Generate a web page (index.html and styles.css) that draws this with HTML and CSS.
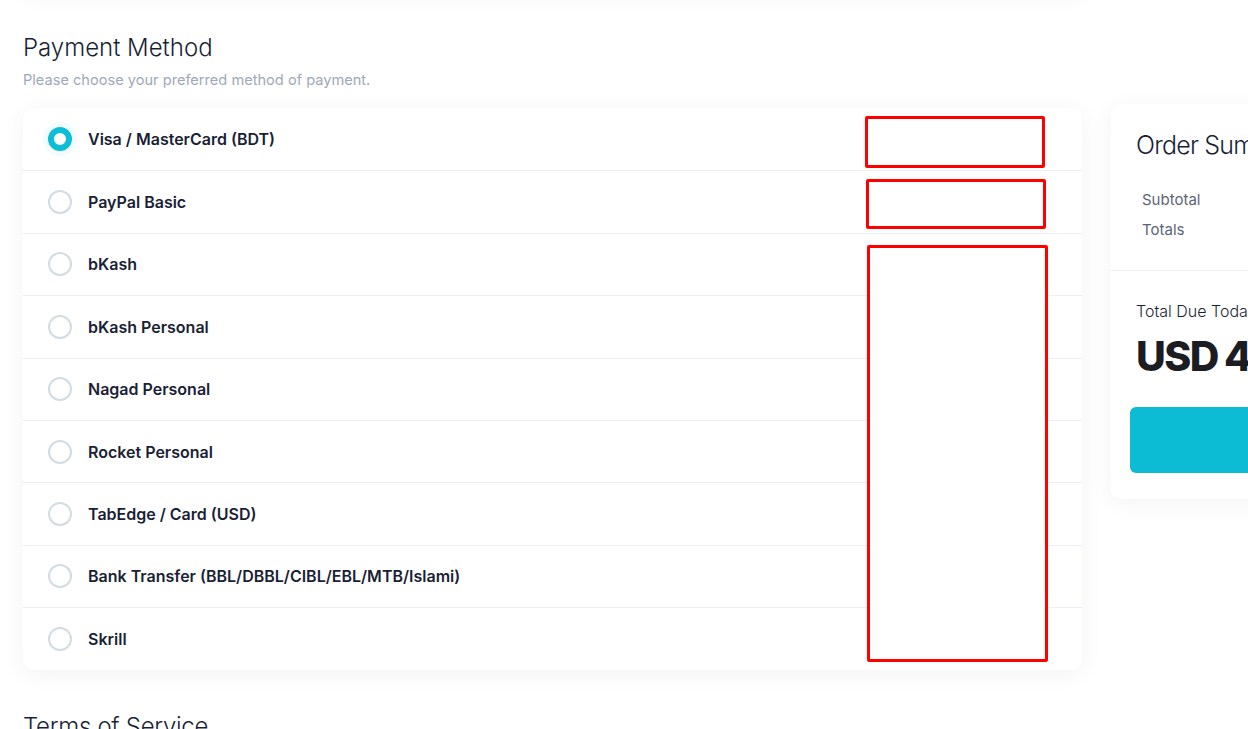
FILE: index.html
```html
<!DOCTYPE html>
<html lang="en">
<head>
<meta charset="utf-8">
<title>Checkout</title>
<link rel="stylesheet" href="styles.css">
</head>
<body>
<div class="page">
  <div class="main">
    <div class="prev-card"></div>
    <h2 class="section-title">Payment Method</h2>
    <p class="section-sub">Please choose your preferred method of payment.</p>
    <div class="methods">
      <label class="method"><span class="radio checked"></span><span class="name">Visa / MasterCard (BDT)</span><span class="mark mark-a"></span></label>
      <label class="method"><span class="radio"></span><span class="name">PayPal Basic</span><span class="mark mark-b"></span></label>
      <label class="method"><span class="radio"></span><span class="name">bKash</span><span class="mark mark-c"></span></label>
      <label class="method"><span class="radio"></span><span class="name">bKash Personal</span></label>
      <label class="method"><span class="radio"></span><span class="name">Nagad Personal</span></label>
      <label class="method"><span class="radio"></span><span class="name">Rocket Personal</span></label>
      <label class="method"><span class="radio"></span><span class="name">TabEdge / Card (USD)</span></label>
      <label class="method"><span class="radio"></span><span class="name">Bank Transfer (BBL/DBBL/CIBL/EBL/MTB/Islami)</span></label>
      <label class="method"><span class="radio"></span><span class="name">Skrill</span></label>
    </div>
    <h2 class="section-title terms">Terms of Service</h2>
  </div>
  <aside class="summary">
    <div class="summary-top">
      <h3 class="summary-title">Order Summary</h3>
      <div class="summary-row">Subtotal</div>
      <div class="summary-row">Totals</div>
    </div>
    <div class="summary-bottom">
      <div class="due-label">Total Due Today</div>
      <div class="due-amount">USD 40.00</div>
      <button class="pay-btn" type="button"></button>
    </div>
  </aside>
</div>
</body>
</html>
```
FILE: styles.css
```css
html, body {
  margin: 0;
  padding: 0;
  overflow: hidden;
  background: #ffffff;
}
body {
  font-family: Inter, "Noto Sans", sans-serif;
  color: #1a1f36;
  width: 1248px;
  height: 729px;
}
.page {
  display: grid;
  grid-template-columns: 1059px 380px;
  column-gap: 29px;
  padding-left: 23px;
  align-items: start;
}
.main {
  display: flex;
  flex-direction: column;
}
.prev-card {
  height: 30px;
  margin-top: -38px;
  margin-bottom: 8px;
  background: #fff;
  border-radius: 10px;
  box-shadow: 0 4px 24px rgba(0, 0, 0, 0.05);
}
.section-title {
  margin: 32px 0 0 0;
  font-size: 24px;
  font-weight: 300;
  line-height: 32px;
  color: #1a1f36;
  letter-spacing: 0;
}
.section-sub {
  margin: 6px 0 0 0;
  font-size: 14.6px;
  line-height: 20px;
  color: #a0a8ba;
  font-weight: 400;
}
.methods {
  margin-top: 18px;
  background: #fff;
  border-radius: 10px;
  box-shadow: 0 4px 24px rgba(0, 0, 0, 0.05);
  display: flex;
  flex-direction: column;
  position: relative;
}
.method {
  height: 62.4px;
  display: flex;
  align-items: center;
  padding-left: 25px;
  box-sizing: border-box;
  border-top: 1px solid #eceef8;
  position: relative;
}
.method:first-child {
  border-top: none;
}
.radio {
  width: 24px;
  height: 24px;
  box-sizing: border-box;
  border-radius: 50%;
  border: 2px solid #d3dce2;
  background: #fff;
  flex: none;
}
.radio.checked {
  border: 6px solid #0ebed6;
  box-shadow: 0 0 0 5px rgba(14, 190, 214, 0.05);
}
.name {
  margin-left: 16px;
  font-size: 16px;
  font-weight: 600;
  color: #1a1f36;
  letter-spacing: 0;
}
.mark {
  position: absolute;
  z-index: 2;
  border: 3px solid #ff0000;
  border-radius: 2px;
  box-sizing: border-box;
  background: #fff;
}
.mark-a { left: 842px; top: 8px; width: 180px; height: 52px; }
.mark-b { left: 843px; top: 8px; width: 180px; height: 50px; }
.mark-c { left: 844px; top: 11px; width: 181px; height: 417px; }
.terms {
  margin-top: 41px;
  letter-spacing: -0.3px;
}
.summary {
  margin-top: 104px;
  background: #fff;
  border-radius: 10px;
  box-shadow: 0 4px 24px rgba(0, 0, 0, 0.05);
  display: flex;
  flex-direction: column;
}
.summary-top {
  padding: 26px 25px 25px 25px;
  border-bottom: 1px solid #eceef8;
}
.summary-title {
  margin: 0 0 25px 0;
  font-size: 25px;
  line-height: 30px;
  font-weight: 300;
  color: #1a1f36;
  letter-spacing: -0.8px;
  white-space: nowrap;
}
.summary-row {
  padding-left: 6px;
  font-size: 15px;
  line-height: 30px;
  color: #5c6478;
}
.summary-bottom {
  padding: 29px 19px 26px 19px;
}
.due-label {
  padding-left: 6px;
  font-size: 16px;
  line-height: 22px;
  font-weight: 300;
  color: #1a1f36;
  white-space: nowrap;
}
.due-amount {
  padding-left: 6px;
  margin-top: 8px;
  font-size: 41px;
  line-height: 52px;
  font-weight: 800;
  color: #1b1d22;
  letter-spacing: -1.6px;
  word-spacing: -1px;
  white-space: nowrap;
}
.pay-btn {
  display: block;
  margin-top: 25px;
  width: 100%;
  height: 66px;
  border: none;
  border-radius: 6px;
  background: #0cbcd4;
}
```
